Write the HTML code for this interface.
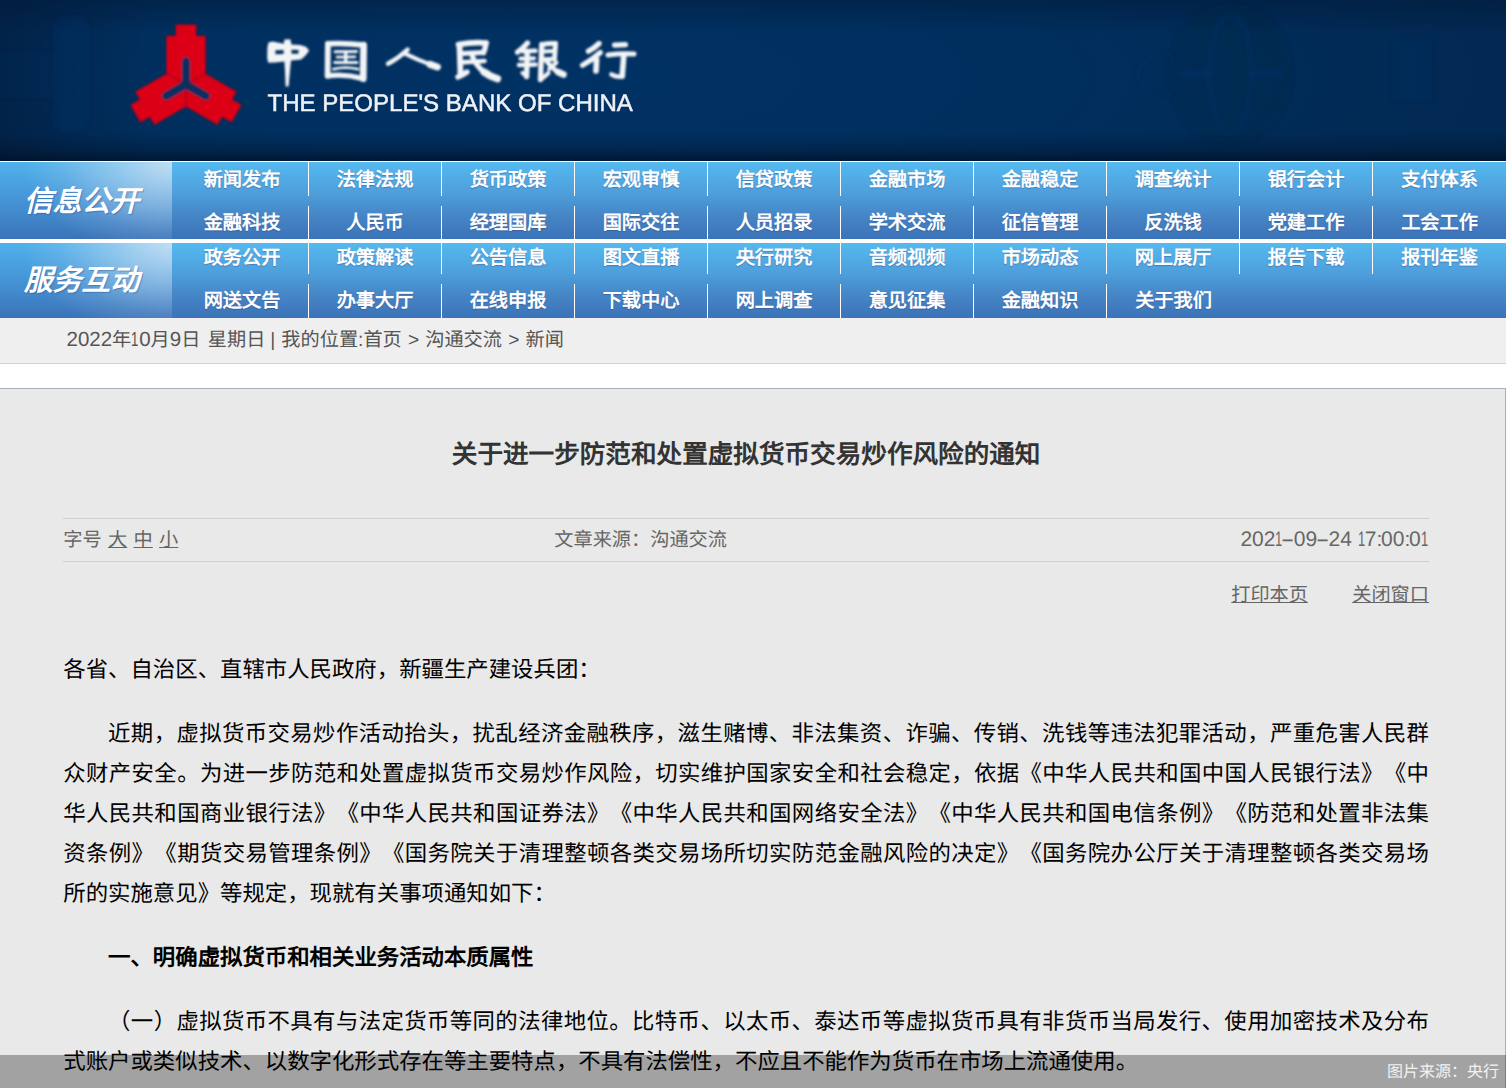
<!DOCTYPE html>
<html lang="zh-CN">
<head>
<meta charset="utf-8">
<title>关于进一步防范和处置虚拟货币交易炒作风险的通知</title>
<style>
*{box-sizing:border-box;margin:0;padding:0}
html,body{width:1506px;height:1088px;overflow:hidden;background:#fff}
body{font-family:"Liberation Sans",sans-serif;position:relative;color:#000;text-spacing-trim:space-all;text-rendering:geometricPrecision}
a{color:inherit}
/* header */
#hd{position:absolute;left:0;top:0;width:1506px;height:161px;overflow:hidden;
background:
linear-gradient(to bottom,rgba(1,14,34,0) 0,rgba(1,14,34,0) 132px,rgba(1,14,34,.3) 150px,rgba(1,14,34,.72) 161px),
linear-gradient(to bottom,rgba(2,20,46,.38) 0,rgba(2,20,46,0) 34px),
linear-gradient(to right,rgba(3,22,50,.45) 0,rgba(3,22,50,0) 150px),
radial-gradient(ellipse 1150px 300px at 560px 78px,#003264 0,#003060 32%,#012b57 66%,#02264c 100%);}
#logo{position:absolute;left:0;top:0}
#en{position:absolute;left:267.5px;top:92.3px;font-size:24.05px;color:#eef1f6;white-space:nowrap;line-height:24px;-webkit-text-stroke:.5px #eef1f6;filter:blur(.45px)}
/* nav */
.nav{position:absolute;left:0;width:1506px;overflow:hidden;
background:linear-gradient(to bottom,#55b9ef 0,#4e9fdc 40%,#4585c6 70%,#3b73b8 100%)}
#n1{top:162px;height:76.7px}
#n2{top:242.7px;height:75.1px}
.nt{position:absolute;left:0;top:0;width:172px;height:100%;
background:
radial-gradient(ellipse 150px 95px at 100% 0,rgba(232,238,246,.74) 0,rgba(232,238,246,.45) 35%,rgba(232,238,246,.12) 75%,rgba(232,238,246,0) 100%),
linear-gradient(to bottom,#50b1eb 0,#4697d9 45%,#3b73b8 100%)}
.nt span{position:absolute;left:24px;font-size:28.8px;font-weight:bold;font-style:italic;color:#fff;white-space:nowrap;line-height:30px;text-shadow:1px 1px 1px rgba(40,60,120,.35)}
.it{position:absolute;width:133px;border-right:1px solid #fff;text-align:center;color:#fff;font-weight:bold;font-size:19.2px;white-space:nowrap;text-shadow:0 1px 1px rgba(60,40,90,.32)}
.it span{position:relative}
#n1 .r1{top:0;height:34.1px;line-height:34.1px}
#n1 .r2{top:43.9px;height:32.8px;line-height:32.8px}
#n2 .r1{top:0;height:31.2px;line-height:31.2px}
#n2 .r2{top:41.1px;height:34.1px;line-height:34.1px}
#n1 .it span{top:1.9px}
#n2 .it span{top:.9px}
#n2 .r1 span{top:.1px}
.nb{border-right:none}
/* crumb */
#bc{position:absolute;left:0;top:317.8px;width:1506px;height:46.2px;background:#efefef;border-bottom:1px solid #d2d2d2}
#bc span{position:absolute;left:66.5px;top:12.2px;font-size:19.2px;line-height:22px;color:#555;white-space:nowrap;word-spacing:.8px}
#bc b{font-weight:normal;font-size:20.5px;line-height:1px}
#bc b.o{display:inline-block;width:7.9px;transform:scaleX(.64);transform-origin:0 50%}
#bc i{font-style:normal;position:relative;left:1.3px}
/* content */
#ct{position:absolute;left:0;top:388px;width:1506px;height:700px;background:#e9e9e9;border-top:1px solid #a7afbb;border-right:1px solid #a7afbb}

#art{position:absolute;left:63.3px;top:0;width:1365.7px;height:699px}
#art h1{position:absolute;left:0;top:51px;width:100%;text-align:center;font-size:25.6px;font-weight:bold;color:#333;line-height:30px;white-space:nowrap}
.ln{position:absolute;left:0;width:100%;height:1px;background:#d0d0d0}
.mt{position:absolute;font-size:19.2px;color:#666;line-height:24px;white-space:nowrap}
.mt a{text-decoration:underline}
.dt{font-size:21px}
.dt b{display:inline-block;font-weight:normal;width:7px;transform:scaleX(.62);transform-origin:0 50%}
.dt i{display:inline-block;font-style:normal;width:11.4px;text-align:center;transform:scaleX(1.95)}
.dt u{text-decoration:none;letter-spacing:-1.24px}
.p{position:absolute;left:0;width:100%;font-size:22.4px;line-height:40px;color:#000;text-indent:2em;white-space:nowrap}
.l{height:40px;text-indent:0;text-align:justify;text-align-last:justify}
.l.f{text-indent:2em}
.l.e{text-align:left;text-align-last:left}
.p.ni{text-indent:0}
.p.b{font-weight:bold}
#ov{position:absolute;left:0;top:1055px;width:1506px;height:33px;background:rgba(0,0,0,.3)}
#src{position:absolute;right:7px;top:1063px;font-size:16px;line-height:20px;color:#f2f2f2;white-space:nowrap}
</style>
</head>
<body>
<div id="hd">
<svg id="logo" width="1506" height="161" viewBox="0 0 1506 161">
<defs>
<filter id="sf" x="-10%" y="-10%" width="120%" height="120%"><feGaussianBlur stdDeviation="1.1"/></filter>
<filter id="tf" x="-5%" y="-20%" width="110%" height="140%"><feGaussianBlur stdDeviation="0.85"/></filter>
<filter id="wf" x="-20%" y="-20%" width="140%" height="140%"><feGaussianBlur stdDeviation="2.2"/></filter>
</defs>
<g filter="url(#wf)">
<rect x="53" y="16" width="36" height="116" rx="14" fill="#04386f" opacity=".22"/>
<rect x="0" y="52" width="50" height="46" fill="#04386f" opacity=".1"/>
<ellipse cx="1230" cy="74" rx="62" ry="70" fill="#011c3c" opacity=".2"/>
<ellipse cx="1230.5" cy="74" rx="21" ry="59" fill="none" stroke="#053c76" stroke-width="5" opacity=".22"/>
<path d="M1181,74 H1208 M1253,74 H1280" stroke="#064080" stroke-width="7" stroke-linecap="round" opacity=".24"/>
<ellipse cx="1172" cy="74" rx="34" ry="20" fill="none" stroke="#053c76" stroke-width="4" opacity=".1"/>
<rect x="1392" y="38" width="40" height="62" fill="#043a72" opacity=".1"/>
</g>
<g transform="translate(186,84.5)" filter="url(#sf)">
<g fill="#dc0012" stroke="#8f0a1c" stroke-width="0.6">
<path d="M0,0 L-19.5,-11.3 L-19.5,-48.6 L-10.2,-48.6 L-10.2,-59.8 L10.2,-59.8 L10.2,-48.6 L19.5,-48.6 L19.5,-11.3 Z"/><path d="M0,0 L-19.5,-11.3 L-19.5,-48.6 L-10.2,-48.6 L-10.2,-59.8 L10.2,-59.8 L10.2,-48.6 L19.5,-48.6 L19.5,-11.3 Z" transform="rotate(120) scale(.975)"/><path d="M0,0 L-19.5,-11.3 L-19.5,-48.6 L-10.2,-48.6 L-10.2,-59.8 L10.2,-59.8 L10.2,-48.6 L19.5,-48.6 L19.5,-11.3 Z" transform="rotate(-120) scale(.975)"/>
</g>
<g stroke="#092d5f" stroke-width="8.4" stroke-linecap="round" fill="none">
<path d="M0,0 L0,-23"/><path d="M0,0 L0,-23" transform="rotate(120)"/><path d="M0,0 L0,-23" transform="rotate(-120)"/>
</g>
</g>
<g id="cn" fill="none" stroke="#f3f4f6" stroke-linecap="round" stroke-linejoin="round" filter="url(#tf)">
<!-- zhong -->
<path fill="#f3f4f6" fill-rule="evenodd" stroke="none" d="M268.4,42.4 L272.6,41.4 L283.8,43.8 L284.4,39.6 L290.4,39.2 L291.4,44.4 L300.2,45 L306,46.8 L309.2,50.4 L305.8,55.2 L301.2,59.6 L291,60.4 L290,71 L288.6,86.4 L285.6,86.6 L285,71 L284.4,61.4 L275,62.4 L268.2,62.8 L267.2,58 L267.4,47.6 Z M275.4,50.2 L283.6,50 L283.6,54 L275.4,54.2 Z M291.5,49.8 L298.8,49.9 L298.2,53.7 L291.5,53.7 Z"/>
<!-- guo -->
<path stroke-width="5.8" d="M327.9,43.8 L327.6,75.8"/>
<path stroke-width="5.6" d="M328,43.7 Q346,42.8 363.6,45"/>
<path stroke-width="6.8" d="M363.6,45.2 L363.2,78.6"/>
<path stroke-width="5.4" d="M327.6,75.8 Q345,73.6 363,78.6"/>
<path stroke-width="3" d="M335,51.8 L356.6,51.4"/>
<path stroke-width="2.8" d="M337,57.1 L355,56.8"/>
<path stroke-width="3" d="M334.6,62.6 L357,62.4"/>
<path stroke-width="2.8" d="M333.4,69.2 Q345.5,66.2 358,69.2"/>
<path stroke-width="3.4" d="M345.7,52 L345.7,62.5"/>
<!-- ren -->
<path stroke-width="4.4" d="M407.6,49.6 Q398,58.5 388,63.8"/>
<path stroke-width="4.2" d="M405,53.6 Q418,60 430,64.4"/>
<path stroke-width="7" d="M430,64.4 L437.4,67"/>
<!-- min -->
<path stroke-width="5.7" d="M458.5,44.5 Q472,42 486,43"/>
<path stroke-width="5.4" d="M486,43 Q485.5,48 483.5,52.8"/>
<path stroke-width="5.0" d="M462.5,53.5 L483.5,52.6"/>
<path stroke-width="5.9" d="M459.5,45 L460.5,74"/>
<path stroke-width="5.4" d="M458,77 Q462,75.5 467,72"/>
<path stroke-width="4.7" d="M461,62.3 L484.5,61"/>
<path stroke-width="5.2" d="M471.5,53.5 Q474.5,64.5 484,72"/>
<path stroke-width="7.3" d="M484,72 Q490,76.5 497.5,78.8"/>
<!-- yin -->
<path stroke-width="5.2" d="M527.5,43 Q523,48.5 517.5,52.2"/>
<path stroke-width="4.5" d="M523,51.2 L535.5,50.8"/>
<path stroke-width="4.2" d="M520.5,58.6 L534,58.4"/>
<path stroke-width="4.5" d="M519,65 L535.5,64.5"/>
<path stroke-width="5.4" d="M527.3,51.5 L526.6,76.5"/>
<path stroke-width="4.2" d="M526.6,76.5 L522.5,73"/>
<path stroke-width="5.4" d="M541.8,44.5 L540.5,79.5"/>
<path stroke-width="5.0" d="M542,44.6 Q549,43 555.5,43.6"/>
<path stroke-width="5.0" d="M555.5,43.6 L554.5,59"/>
<path stroke-width="4.0" d="M542.5,51.6 L554.5,51"/>
<path stroke-width="4.5" d="M542,59.6 L554.5,59"/>
<path stroke-width="4.7" d="M546.5,61 Q551.5,68 558,72"/>
<path stroke-width="6.6" d="M558,72 L563.5,74.6"/>
<path stroke-width="4.0" d="M556.5,62.5 Q553,66 549,69"/>
<path stroke-width="4.2" d="M540.5,79.5 Q544.5,77 548.5,73"/>
<!-- hang -->
<path stroke-width="5.4" d="M599,43.5 Q594,48.5 588.5,51.2"/>
<path stroke-width="5.2" d="M600.3,52.5 Q592,60 582.5,65.2"/>
<path stroke-width="5.7" d="M596.6,59.5 L596,70.8"/>
<path stroke-width="5.2" d="M614.5,45.2 L625.5,44.6"/>
<path stroke-width="5.0" d="M608,55 Q621,53 634,54"/>
<path stroke-width="5.7" d="M623.8,55 L622.2,76"/>
<path stroke-width="4.7" d="M622.2,76.5 Q617,77.5 611.5,74.5"/>
</g>
</svg>
<div id="en">THE PEOPLE'S BANK OF CHINA</div>
</div>
<div class="nav" id="n1">
<div class="nt"><span class="ts" style="top:25px">信息公开</span></div>
<div class="it r1" style="left:176px"><span>新闻发布</span></div><div class="it r1" style="left:309px"><span>法律法规</span></div><div class="it r1" style="left:442px"><span>货币政策</span></div><div class="it r1" style="left:575px"><span>宏观审慎</span></div><div class="it r1" style="left:708px"><span>信贷政策</span></div><div class="it r1" style="left:841px"><span>金融市场</span></div><div class="it r1" style="left:974px"><span>金融稳定</span></div><div class="it r1" style="left:1107px"><span>调查统计</span></div><div class="it r1" style="left:1240px"><span>银行会计</span></div><div class="it r1 nb" style="left:1373px"><span>支付体系</span></div>
<div class="it r2" style="left:176px"><span>金融科技</span></div><div class="it r2" style="left:309px"><span>人民币</span></div><div class="it r2" style="left:442px"><span>经理国库</span></div><div class="it r2" style="left:575px"><span>国际交往</span></div><div class="it r2" style="left:708px"><span>人员招录</span></div><div class="it r2" style="left:841px"><span>学术交流</span></div><div class="it r2" style="left:974px"><span>征信管理</span></div><div class="it r2" style="left:1107px"><span>反洗钱</span></div><div class="it r2" style="left:1240px"><span>党建工作</span></div><div class="it r2 nb" style="left:1373px"><span>工会工作</span></div>
</div>
<div class="nav" id="n2">
<div class="nt"><span class="ts" style="top:23px">服务互动</span></div>
<div class="it r1" style="left:176px"><span>政务公开</span></div><div class="it r1" style="left:309px"><span>政策解读</span></div><div class="it r1" style="left:442px"><span>公告信息</span></div><div class="it r1" style="left:575px"><span>图文直播</span></div><div class="it r1" style="left:708px"><span>央行研究</span></div><div class="it r1" style="left:841px"><span>音频视频</span></div><div class="it r1" style="left:974px"><span>市场动态</span></div><div class="it r1" style="left:1107px"><span>网上展厅</span></div><div class="it r1" style="left:1240px"><span>报告下载</span></div><div class="it r1 nb" style="left:1373px"><span>报刊年鉴</span></div>
<div class="it r2" style="left:176px"><span>网送文告</span></div><div class="it r2" style="left:309px"><span>办事大厅</span></div><div class="it r2" style="left:442px"><span>在线申报</span></div><div class="it r2" style="left:575px"><span>下载中心</span></div><div class="it r2" style="left:708px"><span>网上调查</span></div><div class="it r2" style="left:841px"><span>意见征集</span></div><div class="it r2" style="left:974px"><span>金融知识</span></div><div class="it r2 nb" style="left:1107px"><span>关于我们</span></div>
</div>
<div id="bc"><span id="bct"><b>2022</b>年<b class="o">1</b><b>0</b>月<b>9</b>日 <i>星期日</i> | 我的位置:首页 &gt; 沟通交流 &gt; 新闻</span></div>
<div id="ct"><div id="art">
<h1>关于进一步防范和处置虚拟货币交易炒作风险的通知</h1>
<div class="ln" style="top:129px"></div>
<div class="mt" id="fs" style="left:0;top:139.8px;word-spacing:1px">字号 <a>大</a> <a>中</a> <a>小</a></div>
<div class="mt" style="left:491px;top:139.8px">文章来源：沟通交流</div>
<div class="mt dt" id="dt" style="left:1177.1px;top:139px">202<b>1</b><i>-</i>09<i>-</i>24 <b>1</b>7<u>:</u>00<u>:</u>0<b>1</b></div>
<div class="ln" style="top:172px"></div>
<div class="mt" style="right:121px;top:194.8px"><a>打印本页</a></div>
<div class="mt" style="right:0;top:194.8px"><a>关闭窗口</a></div>
<div class="p ni" style="top:261.2px">各省、自治区、直辖市人民政府，新疆生产建设兵团：</div>
<div class="p" style="top:325px"><div class="l f">近期，虚拟货币交易炒作活动抬头，扰乱经济金融秩序，滋生赌博、非法集资、诈骗、传销、洗钱等违法犯罪活动，严重危害人民群</div><div class="l">众财产安全。为进一步防范和处置虚拟货币交易炒作风险，切实维护国家安全和社会稳定，依据《中华人民共和国中国人民银行法》《中</div><div class="l">华人民共和国商业银行法》《中华人民共和国证券法》《中华人民共和国网络安全法》《中华人民共和国电信条例》《防范和处置非法集</div><div class="l">资条例》《期货交易管理条例》《国务院关于清理整顿各类交易场所切实防范金融风险的决定》《国务院办公厅关于清理整顿各类交易场</div><div class="l e">所的实施意见》等规定，现就有关事项通知如下：</div></div>
<div class="p b" style="top:549px">一、明确虚拟货币和相关业务活动本质属性</div>
<div class="p" style="top:613px"><div class="l f">（一）虚拟货币不具有与法定货币等同的法律地位。比特币、以太币、泰达币等虚拟货币具有非货币当局发行、使用加密技术及分布</div><div class="l e">式账户或类似技术、以数字化形式存在等主要特点，不具有法偿性，不应且不能作为货币在市场上流通使用。</div></div>
</div></div>
<div id="ov"></div>
<div id="src">图片来源：央行</div>
</body>
</html>
